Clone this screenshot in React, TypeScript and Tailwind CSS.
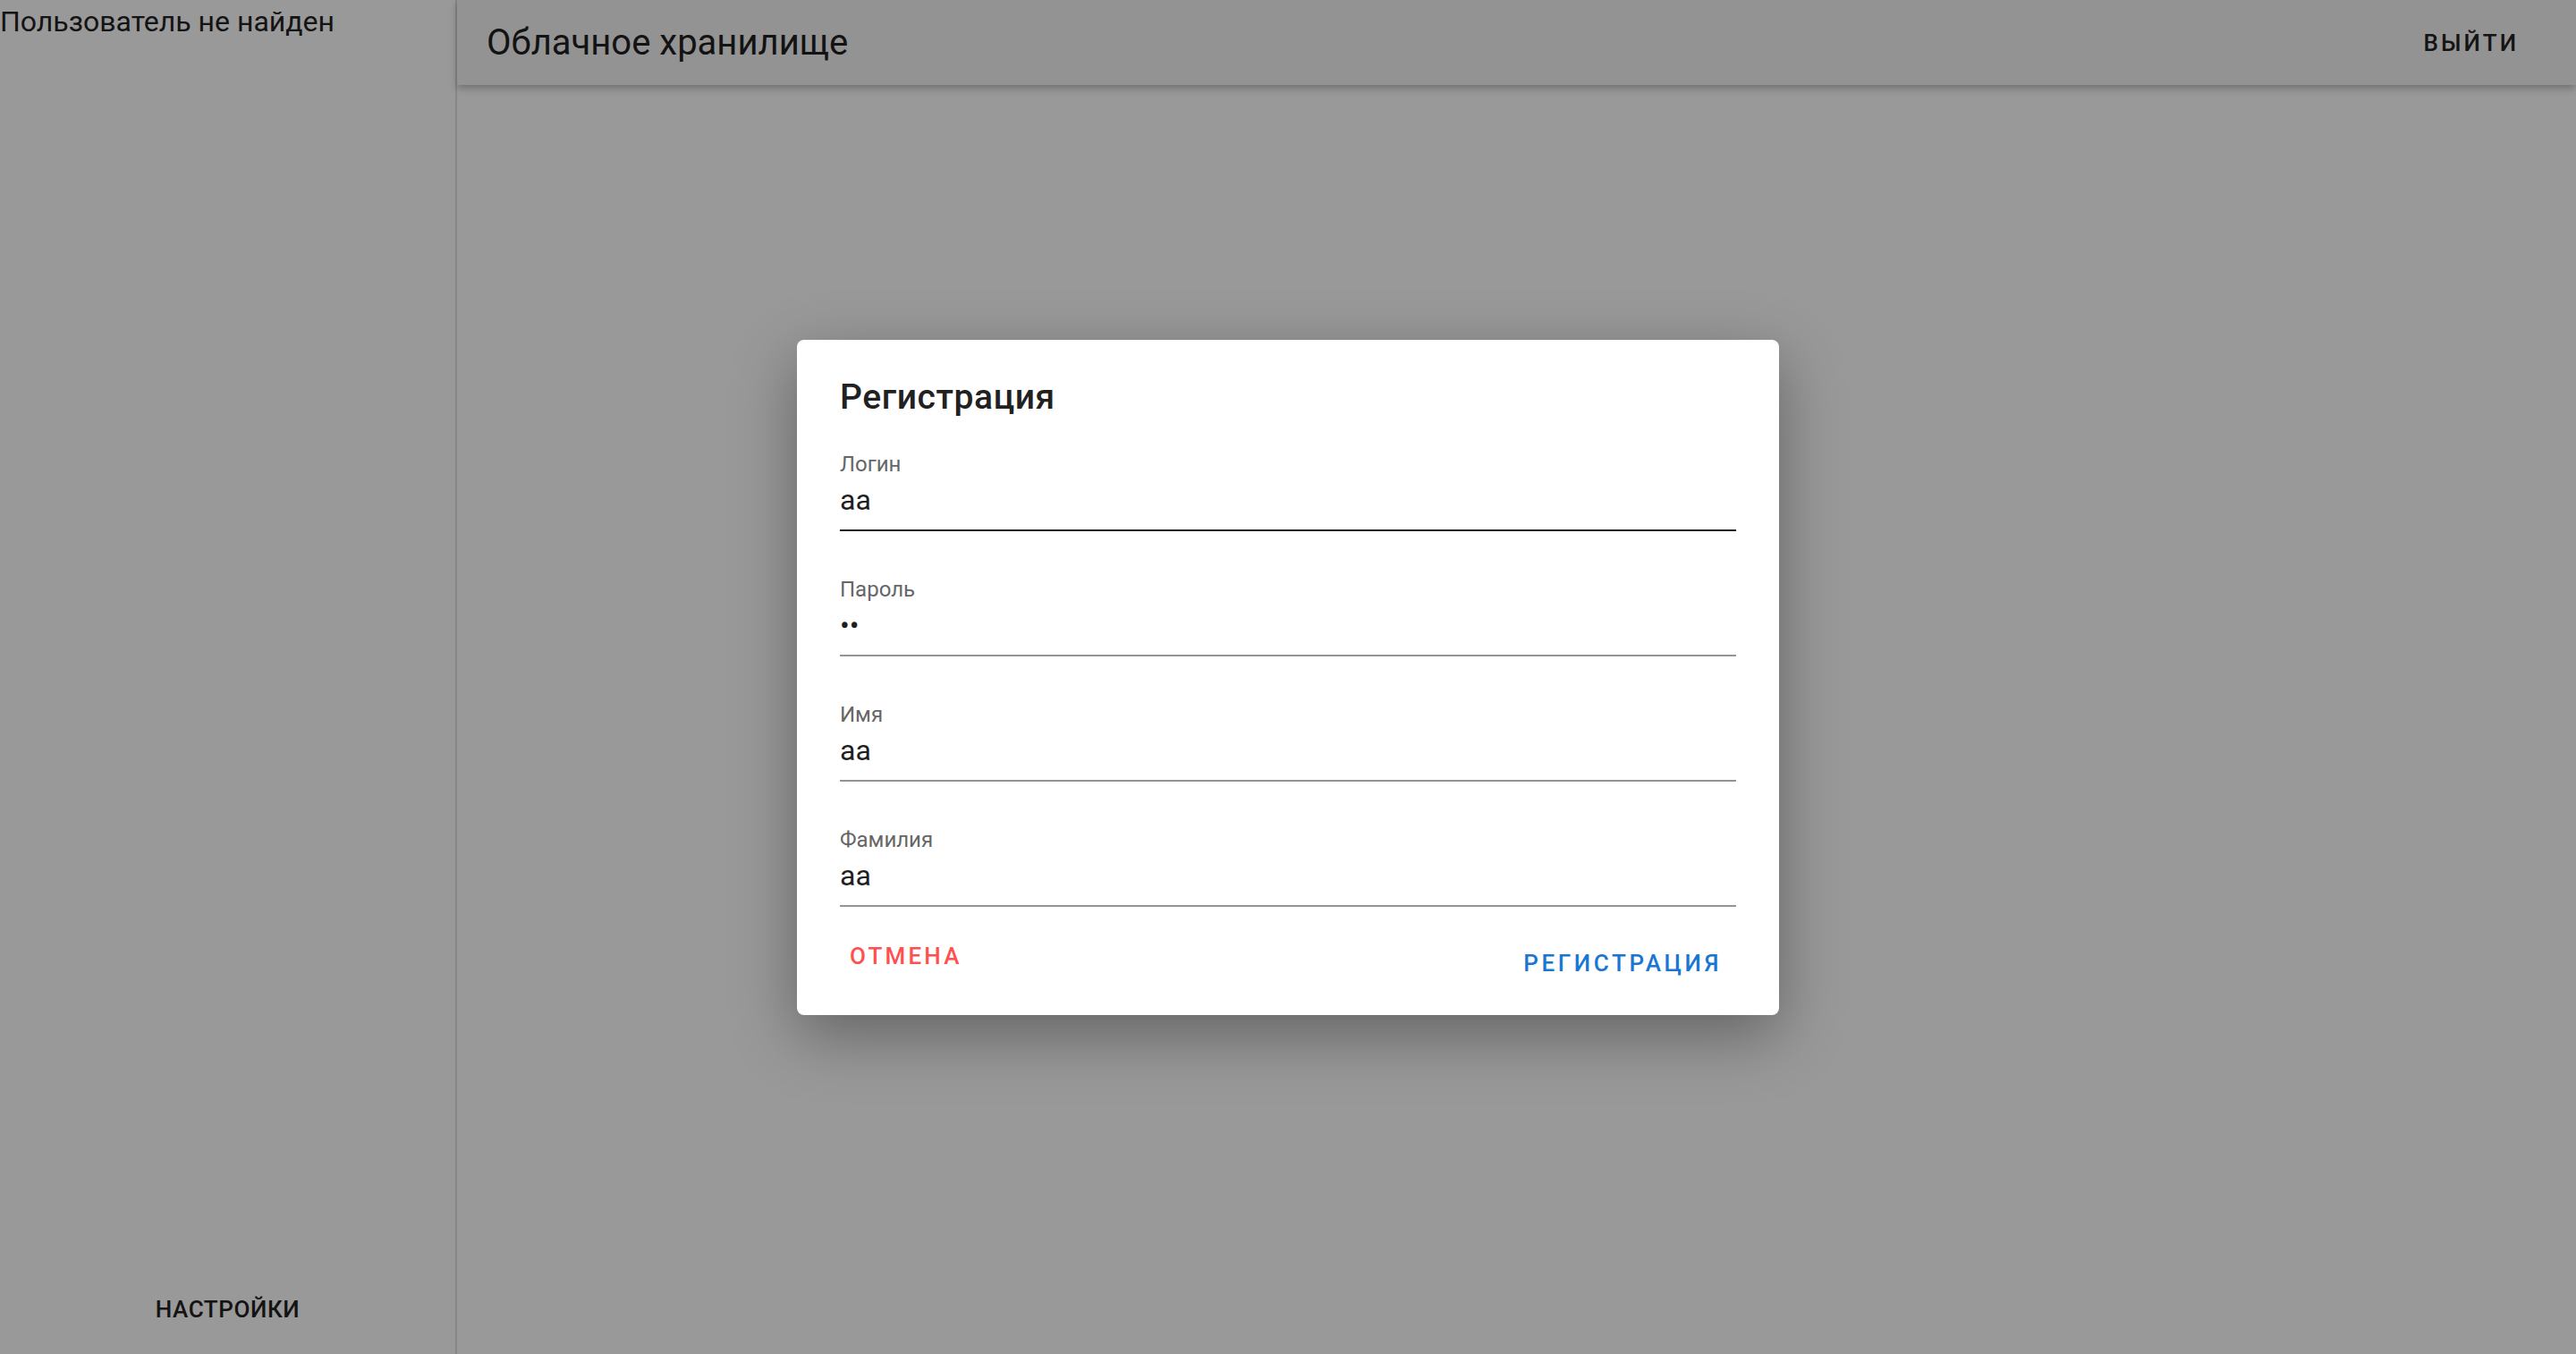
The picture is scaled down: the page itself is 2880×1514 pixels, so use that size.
import React from "react";

const font = { fontFamily: "Roboto, 'Noto Sans', sans-serif" };

function Field({ label, value, dark }: { label: string; value: string; dark?: boolean }) {
  return (
    <div className="flex flex-col">
      <div className="text-[24px] leading-[24px] text-[#666666]">{label}</div>
      <div
        className={
          "mt-[5px] pb-[10px] text-[32px] leading-[46px] text-[#1f1f1f] border-b-2 " +
          (dark ? "border-[#222222]" : "border-[#949494]")
        }
      >
        {value}
      </div>
    </div>
  );
}

export default function App() {
  return (
    <div className="relative h-[1514px] w-[2880px] overflow-hidden bg-white" style={font}>
      <div className="flex h-full">
        <aside className="flex w-[511px] shrink-0 flex-col justify-between border-r-2 border-[#e0e0e0]">
          <div className="text-[32px] leading-[48px] text-[#222222]">Пользователь не найден</div>
          <div className="flex justify-center pb-[14px]">
            <button className="h-[72px] px-[16px] text-[26px] font-medium uppercase tracking-[0.6px] text-[#222222]">
              Настройки
            </button>
          </div>
        </aside>
        <main className="flex flex-1 flex-col">
          <header className="flex h-[95px] items-center justify-between bg-[#f5f5f5] pl-[33px] pr-[48px] shadow-[0_4px_8px_rgba(0,0,0,0.25)]">
            <div className="text-[40px] leading-[48px] text-[#212121]">Облачное хранилище</div>
            <button className="px-[16px] pt-[2px] text-[26px] font-medium uppercase tracking-[3px] text-[#222222]">
              Выйти
            </button>
          </header>
        </main>
      </div>

      <div className="absolute inset-0 flex items-center justify-center bg-[rgba(0,0,0,0.4)]">
        <div className="flex h-[755px] w-[1098px] flex-col rounded-[8px] bg-white shadow-[0_22px_70px_rgba(0,0,0,0.35)]">
          <div className="px-[48px] pt-[32px] text-[39px] font-medium leading-[64px] tracking-[0.6px] text-[#212121]">
            Регистрация
          </div>
          <div className="flex flex-col gap-[53px] px-[48px] pt-[31px]">
            <Field label="Логин" value="aa" dark />
            <Field label="Пароль" value="••" />
            <Field label="Имя" value="aa" />
            <Field label="Фамилия" value="aa" />
          </div>
          <div className="flex items-start justify-between px-[59px] pt-[40px] pr-[64px]">
            <button className="text-[26px] font-medium uppercase leading-[30px] tracking-[3.2px] text-[#ff4f4f]">
              Отмена
            </button>
            <button className="mt-[8px] text-[26px] font-medium uppercase leading-[30px] tracking-[3.6px] text-[#1976d2]">
              Регистрация
            </button>
          </div>
        </div>
      </div>
    </div>
  );
}
